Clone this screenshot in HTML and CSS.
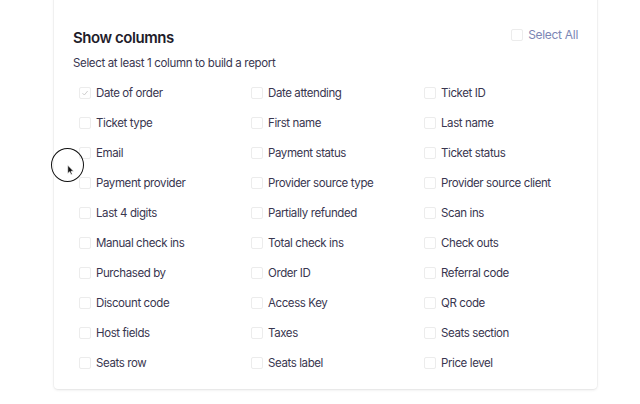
FILE: index.html
```html
<!DOCTYPE html>
<html>
<head>
<meta charset="utf-8">
<link rel="stylesheet" href="styles.css">
</head>
<body>
<div class="page">
  <section class="card">
    <header class="head">
      <h1 class="title">Show columns</h1>
      <label class="select-all"><span class="box"></span><span>Select All</span></label>
    </header>
    <p class="sub">Select at least 1 column to build a report</p>
    <div class="grid">
      <label class="item"><span class="box checked"><svg viewBox="0 0 12 12" width="12" height="12"><path d="M3 6.2 L5.2 8.4 L9.2 3.6" fill="none" stroke="#c4c4c4" stroke-width="1"/></svg></span><span>Date of order</span></label>
      <label class="item"><span class="box"></span><span>Date attending</span></label>
      <label class="item"><span class="box"></span><span>Ticket ID</span></label>
      <label class="item"><span class="box"></span><span>Ticket type</span></label>
      <label class="item"><span class="box"></span><span>First name</span></label>
      <label class="item"><span class="box"></span><span>Last name</span></label>
      <label class="item"><span class="box"></span><span>Email</span></label>
      <label class="item"><span class="box"></span><span>Payment status</span></label>
      <label class="item"><span class="box"></span><span>Ticket status</span></label>
      <label class="item"><span class="box"></span><span>Payment provider</span></label>
      <label class="item"><span class="box"></span><span>Provider source type</span></label>
      <label class="item"><span class="box"></span><span>Provider source client</span></label>
      <label class="item"><span class="box"></span><span>Last 4 digits</span></label>
      <label class="item"><span class="box"></span><span>Partially refunded</span></label>
      <label class="item"><span class="box"></span><span>Scan ins</span></label>
      <label class="item"><span class="box"></span><span>Manual check ins</span></label>
      <label class="item"><span class="box"></span><span>Total check ins</span></label>
      <label class="item"><span class="box"></span><span>Check outs</span></label>
      <label class="item"><span class="box"></span><span>Purchased by</span></label>
      <label class="item"><span class="box"></span><span>Order ID</span></label>
      <label class="item"><span class="box"></span><span>Referral code</span></label>
      <label class="item"><span class="box"></span><span>Discount code</span></label>
      <label class="item"><span class="box"></span><span>Access Key</span></label>
      <label class="item"><span class="box"></span><span>QR code</span></label>
      <label class="item"><span class="box"></span><span>Host fields</span></label>
      <label class="item"><span class="box"></span><span>Taxes</span></label>
      <label class="item"><span class="box"></span><span>Seats section</span></label>
      <label class="item"><span class="box"></span><span>Seats row</span></label>
      <label class="item"><span class="box"></span><span>Seats label</span></label>
      <label class="item"><span class="box"></span><span>Price level</span></label>
    </div>
  </section>
  <div class="cursor">
    <svg viewBox="0 0 12 16" width="9" height="13"><path d="M1 1 L1 12 L3.6 9.6 L5.4 13.6 L7 12.9 L5.3 9 L8.8 9 Z" fill="#111" stroke="#fff" stroke-width="0.8"/></svg>
  </div>
</div>
</body>
</html>
```
FILE: styles.css
```css
html, body { margin: 0; padding: 0; background: #fff; }
body { font-family: "Inter", "Liberation Sans", sans-serif; color: #39364f; }
.page { position: relative; width: 640px; height: 404px; overflow: hidden; }
.card {
  margin: -12px 0 0 54px;
  width: 543px;
  height: 401px;
  box-sizing: border-box;
  background: #fff;
  border-radius: 4px;
  box-shadow: 0 1px 3px rgba(0,0,0,0.10), 0 0 0 1px rgba(0,0,0,0.025);
  padding: 39px 19px 0 19px;
}
.head { display: flex; justify-content: space-between; align-items: flex-start; }
.title { margin: 0; padding-top: 1px; font-size: 15px; font-weight: 600; color: #1f1d2b; line-height: 20px; letter-spacing: -0.45px; }
.select-all { display: flex; align-items: center; gap: 5px; font-size: 12px; color: #7b86b5; line-height: 16px; margin-top: 0; letter-spacing: -0.3px; }
.sub { margin: 7px 0 0 0; font-size: 11.5px; line-height: 16px; color: #39364f; letter-spacing: -0.35px; }
.grid {
  display: grid;
  grid-template-columns: 172px 173px 150px;
  grid-auto-rows: 30px;
  margin: 14px 0 0 6px;
}
.item { display: flex; align-items: center; gap: 5px; font-size: 11.5px; color: #39364f; line-height: 16px; height: 16px; letter-spacing: -0.4px; }
.box {
  width: 12px; height: 12px;
  border: 1px solid #ececec;
  border-radius: 2px;
  box-sizing: border-box;
  flex: none;
  display: flex; align-items: center; justify-content: center;
  background: #fff;
}
.box svg { display: block; }
.cursor {
  position: absolute;
  left: 51px; top: 148px;
  width: 33px; height: 34px;
  box-sizing: border-box;
  border: 1.5px solid #111;
  border-radius: 50%;
}
.cursor svg { position: absolute; left: 15px; top: 15px; }
```
